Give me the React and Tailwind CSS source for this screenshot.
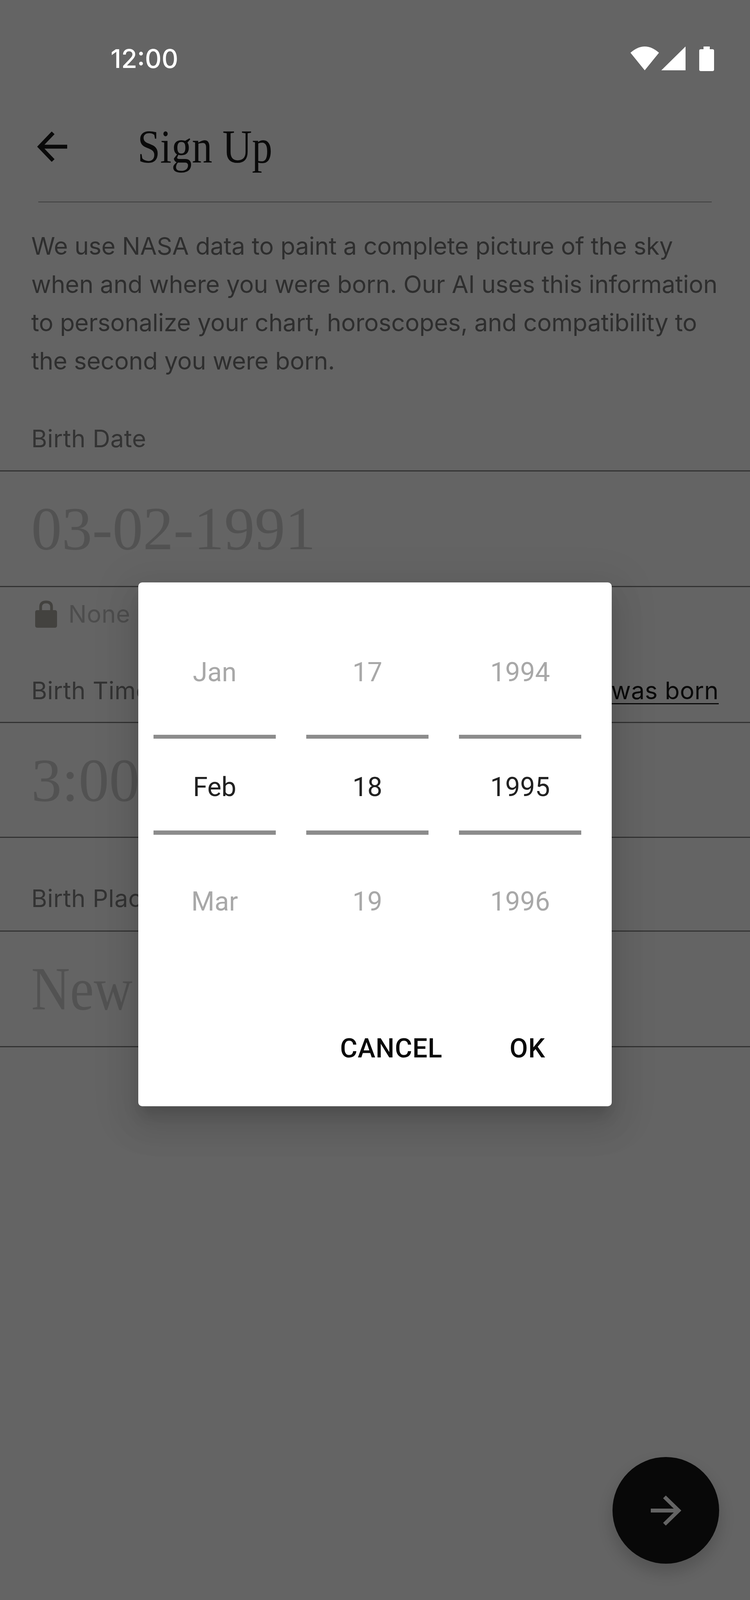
import React from 'react';

const BODY = "font-['Inter',sans-serif]";
const SERIF = "font-['Liberation_Serif',serif]";
const ROBOTO = "font-['Roboto',sans-serif]";

function FieldLabel({ children, right }) {
  return (
    <div className={`flex h-full items-end justify-between pl-[80px] pr-[80px] text-[62px] leading-[72px] tracking-[0.5px] text-[#333333] ${BODY}`}>
      <span>{children}</span>
      {right}
    </div>
  );
}

function BigValue({ children, className = '' }) {
  return (
    <div className="pl-[80px]">
      <div className={`text-[156px] leading-[156px] text-[#525252] ${SERIF} ${className}`}>{children}</div>
    </div>
  );
}

function WheelColumn({ prev, value, next }) {
  return (
    <div className={`flex w-[313px] flex-col items-center text-[68px] leading-[80px] ${ROBOTO}`}>
      <div className="flex h-[390px] w-full items-end justify-center pb-[120px] text-[#a8a8a8]">{prev}</div>
      <div className="h-[10px] w-full bg-[#8c8c8c]"></div>
      <div className="flex h-[235px] w-full justify-center pt-[84px] text-[#212121]">{value}</div>
      <div className="h-[11px] w-full bg-[#8c8c8c]"></div>
      <div className="flex h-[211px] w-full justify-center pt-[131px] text-[#a8a8a8]">{next}</div>
    </div>
  );
}

function PickerDialog() {
  return (
    <div className="absolute left-[354px] top-[1491px] flex h-[1341px] w-[1212px] flex-col rounded-[10px] bg-white pl-[39px] pr-[77px] shadow-[0_48px_80px_16px_rgba(0,0,0,0.08),0_20px_100px_40px_rgba(0,0,0,0.05),0_30px_30px_-10px_rgba(0,0,0,0.12)]">
      <div className="flex gap-[78px]">
        <WheelColumn prev="Jan" value="Feb" next="Mar" />
        <WheelColumn prev="17" value="18" next="19" />
        <WheelColumn prev="1994" value="1995" next="1996" />
      </div>
      <div className={`mt-[296px] flex justify-end gap-[172px] pr-[93px] text-[68px] font-medium leading-[80px] tracking-[0.8px] text-[#0a0a0a] ${ROBOTO}`}>
        <span>CANCEL</span>
        <span>OK</span>
      </div>
    </div>
  );
}

export default function App() {
  return (
    <div className={`relative h-[4160px] w-[1920px] overflow-hidden bg-[#646464] ${BODY}`}>
      {/* status bar */}
      <div className="mt-[105px] flex h-[90px] items-center justify-between pl-[283px] pr-[92px]">
        <span className="text-[66px] font-medium leading-[90px] text-white">12:00</span>
        <svg width="214" height="63" viewBox="0 0 214 63" fill="#ffffff">
          <path d="M0 16 Q36.5 -16 73 16 L36.5 61 Z" />
          <path d="M79 61 L141 0 L141 61 Z" />
          <path d="M187 0 H203 V7 H210 Q214 7 214 11 V59 Q214 63 210 63 H180 Q176 63 176 59 V11 Q176 7 180 7 H187 Z" />
        </svg>
      </div>

      {/* header */}
      <div className="flex h-[321px] pl-[95px] pt-[142px]">
        <svg width="77" height="77" viewBox="0 0 77 77" fill="none" stroke="#0a0a0a" strokeWidth="10">
          <path d="M77 38.5 H8 M41 3 L7 38.5 L41 74" />
        </svg>
        <span className={`ml-[180px] mt-[-26px] origin-left scale-x-[0.87] text-[120px] leading-[130px] text-[#0a0a0a] ${SERIF}`}>Sign Up</span>
      </div>
      <div className="mx-[98px] h-[2px] bg-[#3f3f3f]"></div>

      {/* intro */}
      <div className="pl-[80px] pt-[63px] text-[62px] leading-[98px] tracking-[-0.3px] text-[#2e2e2e]">
        <div>We use NASA data to paint a complete picture of the sky</div>
        <div>when and where you were born. Our AI uses this information</div>
        <div>to personalize your chart, horoscopes, and compatibility to</div>
        <div>the second you were born.</div>
      </div>

      {/* birth date */}
      <div className="h-[186px]">
        <FieldLabel>Birth Date</FieldLabel>
      </div>
      <div className="mt-[45px] h-[299px] border-y-[3px] border-[#333333] pt-[69px]">
        <BigValue>03-02-1991</BigValue>
      </div>
      <div className="mt-[33px] flex h-[71px] items-center gap-[29px] pl-[90px] text-[62px] leading-[72px] tracking-[0.5px] text-[#4d4d4d]">
        <svg width="56" height="71" viewBox="0 0 56 71" fill="none">
          <path d="M14 28 V18 Q14 5 28 5 Q42 5 42 18 V28" stroke="#43423f" strokeWidth="7" />
          <rect x="0" y="26" width="56" height="45" rx="5" fill="#43423f" />
        </svg>
        <span>None of this is shared</span>
      </div>

      {/* birth time */}
      <div className="h-[197px]">
        <FieldLabel right={<span className="text-[#0a0a0a] underline decoration-[3px] underline-offset-[10px]">I was born</span>}>Birth Time</FieldLabel>
      </div>
      <div className="mt-[44px] h-[297px] border-y-[3px] border-[#333333] pt-[69px]">
        <BigValue>3:00</BigValue>
      </div>

      {/* birth place */}
      <div className="h-[191px]">
        <FieldLabel>Birth Place</FieldLabel>
      </div>
      <div className="mt-[46px] h-[299px] border-y-[3px] border-[#333333] pt-[69px]">
        <BigValue className="origin-left scale-x-[0.88]">New York</BigValue>
      </div>

      <PickerDialog />

      {/* next button */}
      <div className="absolute left-[1568px] top-[3730px] flex h-[273px] w-[273px] items-center justify-center rounded-full bg-[#080808] shadow-[0_20px_36px_4px_rgba(0,0,0,0.16)]">
        <svg width="80" height="80" viewBox="0 0 80 80" fill="none" stroke="#646464" strokeWidth="10">
          <path d="M1 40 H70 M36 5 L72 40 L36 75" />
        </svg>
      </div>

      {/* home indicator */}
      <div className="absolute left-[783px] top-[4118px] h-[12px] w-[353px] rounded-full bg-[#e8e8e8]"></div>
    </div>
  );
}
